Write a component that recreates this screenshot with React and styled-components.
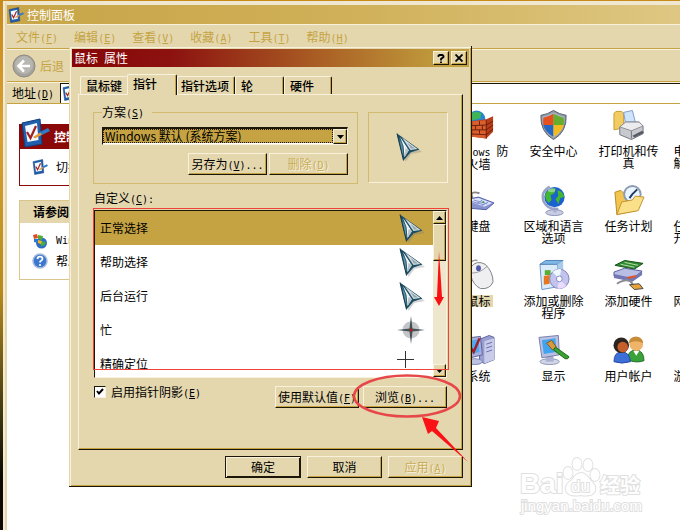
import React from "react";
import styled, { createGlobalStyle, css } from "styled-components";

const c = {
  face: "#e4d7ae",
  light: "#f8f1dc",
  gold: "#c5a343",
  dark: "#1c1708",
  pale: "#d3ba71",
  red: "#8a0808",
};

const GlobalStyle = createGlobalStyle`
  * { box-sizing: border-box; }
  body {
    margin: 0;
    font-family: "Noto Sans CJK SC", "Liberation Sans", sans-serif;
    font-size: 12px;
    line-height: 14px;
    color: #000;
  }
  button, input, select { font: inherit; color: inherit; margin: 0; }
`;

const raised = css`
  background: ${c.face};
  border: 1px solid ${c.dark};
  border-top-color: ${c.light};
  border-left-color: ${c.light};
  box-shadow: inset -1px -1px 0 ${c.gold};
`;

const Desktop = styled.div`
  position: relative;
  min-height: 100vh;
  overflow: hidden;
  padding: 1px 0 0 5px;
  display: flex;
  background: linear-gradient(180deg, #c98a1c 0, #d9a233 25%, #b88a1d 55%, #4d4312 75%, #0c0a03 90%);
`;

const Explorer = styled.section`
  flex: 1;
  min-width: 0;
  display: flex;
  flex-direction: column;
  border-left: 2px solid ${c.face};
  border-top: 4px solid #f0e7d0;
  box-shadow: -2px 0 0 #f3ebd6;
  background: #fff;
`;

const ExplorerTitle = styled.header`
  display: flex;
  align-items: center;
  gap: 3px;
  height: 19px;
  padding-left: 1px;
  background: linear-gradient(90deg, #c7a548, #d0b058 50%, #dec783);
  color: #fff;
`;

const Bar = styled.div`
  display: flex;
  align-items: center;
  height: ${(p) => p.$h}px;
  padding-left: ${(p) => p.$pad}px;
  gap: ${(p) => p.$gap}px;
  background: ${c.face};
  border-top: 1px solid ${c.light};
  border-bottom: 1px solid ${c.gold};
  color: ${(p) => (p.$muted ? c.gold : "#000")};
`;

const PlainButton = styled.button`
  display: flex;
  align-items: center;
  gap: 4px;
  padding: 0;
  border: 0;
  background: none;
  white-space: nowrap;
`;

const AddressBox = styled.div`
  flex: 1;
  height: 20px;
  padding: 1px;
  border-top: 1px solid ${c.dark};
  border-left: 1px solid ${c.dark};
  background: #fff;
`;

const Body = styled.div`
  flex: 1;
  display: flex;
  overflow: hidden;
`;

const Sidebar = styled.aside`
  flex: 0 0 212px;
  padding: 20px 0 0 12px;
  display: flex;
  flex-direction: column;
  gap: 14px;
`;

const Panel = styled.section`
  border: 1px solid ${(p) => (p.$main ? c.red : "#dac68d")};
`;

const PanelHead = styled.h2`
  display: flex;
  align-items: center;
  gap: 4px;
  margin: 0;
  height: ${(p) => (p.$main ? 24 : 22)}px;
  padding-left: ${(p) => (p.$main ? 0 : 13)}px;
  font-size: 12px;
  font-weight: 700;
  color: ${(p) => (p.$main ? "#fff" : "#000")};
  background: ${(p) => (p.$main ? c.red : c.face)};
  svg { margin-top: -8px; }
`;

const PanelBody = styled.div`
  display: flex;
  flex-direction: column;
  padding: ${(p) => p.$py}px 0 ${(p) => p.$py}px 12px;
`;

const SideLink = styled.a`
  display: flex;
  align-items: center;
  gap: 8px;
  height: 20px;
  color: #000;
  text-decoration: none;
  white-space: nowrap;
`;

const Applets = styled.div`
  flex: 1;
  min-width: 0;
  padding: 5px 0 0 222px;
  display: grid;
  grid-template-columns: repeat(4, 75px);
  grid-auto-rows: 75px;
`;

const Applet = styled.a`
  display: flex;
  flex-direction: column;
  align-items: center;
  gap: 4px;
  color: #000;
  text-decoration: none;
  text-align: center;
  line-height: 12px;
  white-space: pre;
  svg { flex: none; }
`;

const AppletLabel = styled.span`
  background: ${(p) => (p.$on ? c.face : "none")};
  padding: 0 2px;
`;

const Mono = styled.span`
  font-family: "DejaVu Sans Mono", monospace;
  font-size: 10px;
  line-height: 10px;
  u { text-underline-offset: 1px; }
`;

/* dialog */
const Dialog = styled.div`
  position: absolute;
  left: 69px;
  top: 46px;
  width: min(403px, calc(100vw - 69px));
  padding: 3px 2px 8px 3px;
  background: ${c.face};
  border-right: 1px solid ${c.dark};
  border-bottom: 1px solid ${c.dark};
  box-shadow: inset 1px 1px 0 ${c.face}, inset 2px 2px 0 ${c.light}, inset -1px -1px 0 ${c.gold};
`;

const DialogTitle = styled.header`
  display: flex;
  align-items: center;
  gap: 2px;
  height: 18px;
  padding: 0 2px;
  color: #fff;
  background: linear-gradient(90deg, #860606 0, #8c1210 25%, #a85a22 60%, #c3a33f 96%);
  h1 {
    flex: 1;
    margin: 0;
    font-size: 12px;
    font-weight: 400;
  }
`;

const CaptionButton = styled.button`
  ${raised}
  width: 16px;
  height: 14px;
  padding: 0;
  display: grid;
  place-items: center;
`;

const DialogBody = styled.div`
  padding: 7px 6px 0;
`;

const Tabs = styled.div`
  display: flex;
  align-items: flex-end;
  height: 20px;
  padding-left: 2px;
`;

const Tab = styled.button`
  height: ${(p) => (p.$on ? 21 : 18)}px;
  width: ${(p) => p.$w}px;
  padding: 0 0 ${(p) => (p.$on ? 2 : 0)}px ${(p) => p.$pad}px;
  text-align: left;
  font-weight: 500;
  white-space: nowrap;
  background: ${c.face};
  border: 1px solid ${c.light};
  border-bottom: 0;
  border-radius: 2px 2px 0 0;
  border-right: ${(p) => (p.$flat ? "0" : `1px solid ${c.dark}`)};
  box-shadow: ${(p) => (p.$flat ? "none" : `inset -1px 0 0 ${c.gold}`)};
  margin-bottom: ${(p) => (p.$on ? -1 : 0)}px;
  position: relative;
  z-index: ${(p) => (p.$on ? 1 : 0)};
`;

const Page = styled.div`
  padding: 10px 13px 41px 14px;
  border: 1px solid ${c.light};
  border-right-color: ${c.dark};
  border-bottom-color: ${c.dark};
  box-shadow: inset -1px -1px 0 ${c.gold};
`;

const Row = styled.div`
  display: flex;
  gap: ${(p) => p.$gap}px;
  justify-content: ${(p) => (p.$end ? "flex-end" : "flex-start")};
`;

const Group = styled.fieldset`
  flex: 1;
  min-width: 0;
  margin: 0;
  padding: 8px 9px 8px 8px;
  border: 1px solid ${c.pale};
  display: flex;
  flex-direction: column;
  gap: 8px;
  legend { padding: 0 8px 0 0; height: 14px; }
`;

const SelectWrap = styled.div`
  display: grid;
  grid-template-columns: 1fr 14px;
  height: 18px;
  border: 1px solid ${c.light};
  border-top: 2px solid ${c.dark};
  border-left: 1px solid ${c.dark};
  background: #fff;
`;

const Select = styled.select`
  grid-column: 1 / 3;
  grid-row: 1;
  appearance: none;
  border: 1px dotted ${c.dark};
  border-radius: 0;
  outline: 0;
  padding: 0 0 0 1px;
  margin-right: 14px;
  height: 14px;
  line-height: 12px;
  background: ${c.gold};
`;

const DropArrow = styled.span`
  ${raised}
  grid-column: 2;
  grid-row: 1;
  display: grid;
  place-items: center;
  pointer-events: none;
`;

const Button = styled.button`
  ${raised}
  flex: 0 0 ${(p) => p.$w}px;
  height: 22px;
  padding: 0;
  white-space: nowrap;
  ${(p) => p.$default && `border-color: ${c.dark}; box-shadow: inset 1px 1px 0 ${c.light}, inset -1px -1px 0 ${c.dark};`}
  &:disabled { color: #c9ac58; text-shadow: 1px 1px 0 ${c.light}; }
`;

const Preview = styled.div`
  flex: 0 0 80px;
  margin: 7px 1px 1px 0;
  border: 1px solid ${c.pale};
  border-right-color: ${c.light};
  border-bottom-color: ${c.light};
  display: grid;
  place-items: center;
`;

const Caption = styled.div`
  height: 14px;
  margin: 7px 0 5px 1px;
`;

const ListFrame = styled.div`
  position: relative;
  margin: 0 2px 0 1px;
  height: 168px;
  display: flex;
  background: #fff;
  border: 1px solid ${c.dark};
  border-right-color: ${c.light};
  border-bottom-color: ${c.light};
`;

const Highlight = styled.div`
  position: absolute;
  inset: -3px -3px 7px -2px;
  border: 1px solid #f0413a;
  pointer-events: none;
`;

const List = styled.ul`
  flex: 1;
  margin: 0 0 8px;
  padding: 0;
  list-style: none;
  overflow: hidden;
`;

const Item = styled.li`
  display: flex;
  align-items: center;
  justify-content: space-between;
  height: 34px;
  padding: 0 8px 0 5px;
  background: ${(p) => (p.$on ? c.gold : "none")};
`;

const IconSlot = styled.span`
  width: 28px;
  display: grid;
  place-items: center start;
`;

const Scroll = styled.div`
  width: 13px;
  display: flex;
  flex-direction: column;
  background: #efe7cd;
`;

const ScrollButton = styled.button`
  ${raised}
  height: 13px;
  padding: 0;
  display: grid;
  place-items: center;
`;

const Thumb = styled.div`
  ${raised}
  height: 37px;
  margin-bottom: auto;
`;

const Options = styled.div`
  display: flex;
  align-items: center;
  gap: 4px;
  margin: 8px 2px 0 1px;
`;

const Check = styled.label`
  flex: 1;
  display: flex;
  align-items: center;
  gap: 5px;
  margin-top: -10px;
  white-space: nowrap;
`;

const CheckBox = styled.span`
  display: grid;
  width: 12px;
  height: 12px;
  place-items: center;
  input, svg { grid-area: 1 / 1; }
  svg { pointer-events: none; }
  input {
    appearance: none;
    width: 12px;
    height: 12px;
    background: #fff;
    border: 1px solid ${c.light};
    border-top-color: ${c.dark};
    border-left-color: ${c.dark};
  }
`;

const Footer = styled.footer`
  display: flex;
  justify-content: flex-end;
  gap: 6px;
  padding-top: 6px;
`;

const Marks = styled.svg`
  position: absolute;
  left: 0;
  top: 0;
  overflow: visible;
  pointer-events: none;
`;

const Watermark = styled.svg`
  position: absolute;
  right: 32px;
  bottom: 10px;
  fill: #fff;
  stroke: #e0e0e0;
  stroke-width: 2px;
  paint-order: stroke;
  font-family: "Liberation Sans", "Noto Sans CJK SC", sans-serif;
`;

const Key = ({ k, dots, colon }) => (
  <Mono>
    (<u>{k}</u>){dots ? "..." : ""}{colon ? ":" : ""}
  </Mono>
);

const Arrow = ({ up }) => (
  <svg width="7" height="4" viewBox="0 0 7 4">
    <path d={up ? "M0 4L3.5 0L7 4Z" : "M0 0H7L3.5 4Z"} fill="#000" />
  </svg>
);

const Cursor = () => (
  <svg width="28" height="29" viewBox="-3 0 28 29">
    <path d="M2.500 2.500L25 19L14.500 21L8.500 29Z" fill="#777" opacity="0.3" />
    <path d="M0 0.500L22.500 16.500L13.500 19.500L6.500 27.500Z" fill="#1d4f64" />
    <path d="M2 5L5.500 12L6.500 22L6 24Z" fill="#5d8ea3" />
    <path d="M3 4L12 17L7.500 24L6.500 13Z" fill="#f3f6f7" />
    <path d="M8.500 15L12 17L7.500 24Z" fill="#b8c3c9" />
    <path d="M4.500 4.500L12.500 15L11.500 17Z" fill="#23586f" />
    <path d="M5 4.500L20.500 16L13.500 17Z" fill="#d5dce0" />
    <path d="M10.500 10L18 15.500L14 15.500Z" fill="#8fa5b0" />
    <path d="M0 0.500L6.500 27.500" stroke="#12394a" />
  </svg>
);

const BusyCursor = () => (
  <svg width="28" height="28" viewBox="0 0 28 28">
    <circle cx="14" cy="14" r="8.500" fill="#c5c5c7" />
    <path d="M14 0L15.500 12.500L28 14L15.500 15.500L14 28L12.500 15.500L0 14L12.500 12.500Z" fill="#405358" />
    <circle cx="14" cy="14" r="1.500" fill="#c01818" />
  </svg>
);

const CrossCursor = () => (
  <svg width="28" height="28" viewBox="0 0 28 28">
    <path d="M8.500 1V18M0 9.500H17" stroke="#333" />
  </svg>
);

const PanelIcon = ({ s }) => (
  <svg width={s} height={s} viewBox="0 0 30 30">
    <path d="M2 5L20 1L22 26L5 29Z" fill="#1e5fae" />
    <path d="M2 5L20 1L22 26L5 29Z" fill="none" stroke="#123c7c" />
    <path d="M5 8L17 5L18.500 22L7.500 24Z" fill="#f4f9ff" />
    <path d="M7 14L10.500 20L16 8" fill="none" stroke="#a32020" strokeWidth="2.200" />
    <path d="M13 19L21 14L22.500 16.500L15 20.500Z" fill="#e8953c" />
    <path d="M20 14L28 10L30 13L22 17Z" fill="#2e7cc9" />
  </svg>
);

const BackIcon = () => (
  <svg width="24" height="24" viewBox="0 0 24 24">
    <circle cx="12" cy="12" r="11" fill="#a5a39d" stroke="#8e8b82" />
    <circle cx="12" cy="11" r="9" fill="#b8b6b0" />
    <path d="M18 12H7M12 6.500L6.500 12L12 17.500" fill="none" stroke="#fff" strokeWidth="2.600" />
  </svg>
);

const UpdateIcon = () => (
  <svg width="16" height="16" viewBox="0 0 16 16">
    <circle cx="9.500" cy="10" r="5.500" fill="#2c6cc4" />
    <path d="M8 9Q12 7 14 10Q12 14 9 13Z" fill="#49a849" />
    <path d="M1 2L5 1L6 5L2 6Z" fill="#e04c20" />
    <path d="M6 2L11 3L10 7L6 6Z" fill="#53ac35" />
    <path d="M2 6L6 6L6 10L2 9Z" fill="#2c78d0" />
    <path d="M6 7L10 8L9 11L6 10Z" fill="#f0b820" />
  </svg>
);

const HelpIcon = () => (
  <svg width="16" height="16" viewBox="0 0 16 16">
    <circle cx="8" cy="8" r="7" fill="#3b76cf" stroke="#a9bbda" strokeWidth="1.500" />
    <path d="M5.500 6Q5.500 3.700 8 3.700Q10.500 3.700 10.500 5.800Q10.500 7 9 7.800Q8 8.400 8 9.500" fill="none" stroke="#fff" strokeWidth="1.800" />
    <circle cx="8" cy="12" r="1.100" fill="#fff" />
  </svg>
);

const drawings = {
  firewall: (
    <>
      <circle cx="14" cy="10" r="9" fill="#2784cf" />
      <path d="M7 6Q12 0 19 4L18 9L10 11Z" fill="#3fb558" />
      <path d="M2 13L24 10L31 7V23L24 30L2 27Z" fill="#b83d18" />
      <path d="M2 13L24 11V30L2 27Z" fill="#d95f2c" />
      <path d="M2 17L24 16L31 12M2 21L24 21L31 16M2 25L24 26L31 20M24 11V30M9 13V17M17 12V16M5 17V21M13 17V21M20 16V21M9 21V25M17 21V25" stroke="#6b1e0b" fill="none" />
    </>
  ),
  shield: (
    <>
      <path d="M16 1Q22 5 29 6Q30 23 16 31Q2 23 3 6Q10 5 16 1Z" fill="#8e98a6" stroke="#566070" />
      <path d="M16 3Q22 6 27.500 7.500Q28 22 16 29.500Q4 22 4.500 7.500Q10 6 16 3Z" fill="#aab4c2" />
      <path d="M16 4.500V16H5.500Q5 12 5.500 8.500Q11 7.500 16 4.500Z" fill="#e5501e" />
      <path d="M16 4.500V16H26.500Q27 12 26.500 8.500Q21 7.500 16 4.500Z" fill="#66ad2c" />
      <path d="M16 16V28.500Q7 23 5.500 16Z" fill="#2667c6" />
      <path d="M16 16V28.500Q25 23 26.500 16Z" fill="#f4bb20" />
    </>
  ),
  printer: (
    <>
      <path d="M1 4L3 2H9L11 4V19L1 21Z" fill="#f2cb62" stroke="#c79a30" />
      <path d="M11 3L20 1L23 13L13 15Z" fill="#cfe3fb" stroke="#7c9ccc" />
      <path d="M7 18L13 13H27L31 17V25L19 31L7 26Z" fill="#c7c9ce" stroke="#73767d" />
      <path d="M7 18L19 22L31 17L27 13H13Z" fill="#ececef" stroke="#8c8f96" />
      <path d="M19 22V30" stroke="#73767d" />
      <path d="M20 27L30 22L32 24L22 29Z" fill="#555a63" />
    </>
  ),
  keyboard: (
    <>
      <path d="M10 14Q6 6 17 9" fill="none" stroke="#888" strokeWidth="2" />
      <path d="M1 16L16 13L32 19L24 26L1 24Z" fill="#8793cf" stroke="#5261a8" />
      <path d="M3 16L16 14L30 19L22 23Z" fill="#dfe4ff" />
      <path d="M7 17L22 21M11 16L25 20M14 20L20 16M19 22L26 18" stroke="#7c8ac8" />
      <circle cx="21" cy="18" r="1" fill="#2fa53a" />
    </>
  ),
  globe: (
    <>
      <ellipse cx="17" cy="29" rx="9" ry="3" fill="#c9cde4" stroke="#8b91b5" />
      <path d="M16 24H19V29H16Z" fill="#a9afd0" />
      <path d="M12 2Q2 8 6 18Q11 27 21 25" fill="none" stroke="#9aa1c6" strokeWidth="2.500" />
      <circle cx="17" cy="13" r="10.500" fill="#1b62cf" />
      <path d="M8 9Q12 3 18 4L17 9L13 11L14 16L11 19Q6 14 8 9Z" fill="#43b72f" />
      <path d="M20 6Q26 7 27 13L23 14L21 20L18 15L21 12Z" fill="#43b72f" />
      <ellipse cx="14" cy="6" rx="4" ry="2" fill="#fff" opacity="0.4" />
    </>
  ),
  task: (
    <>
      <path d="M2 8L8 6L11 9L24 7V27L4 31Z" fill="#f2c550" stroke="#b88a25" />
      <circle cx="20" cy="10" r="9.500" fill="#8e9bb0" />
      <circle cx="20" cy="10" r="7.500" fill="#eaf5ff" />
      <path d="M20 10L25 5M20 10L17 14" stroke="#1d3b66" strokeWidth="2" />
      <path d="M4 31L9 18L20 16L23 12L32 13L26 27Z" fill="#fbe08a" stroke="#c3942a" />
    </>
  ),
  mouse: (
    <>
      <path d="M8 8Q6 0 15 1" fill="none" stroke="#999" strokeWidth="1.500" />
      <path d="M8 8Q14 0 23 5Q31 13 31 23Q28 31 18 30Q10 26 8 16Z" fill="#efeff1" stroke="#7d7e85" />
      <path d="M9 14Q18 14 25 7" fill="none" stroke="#9b9ca5" />
      <ellipse cx="16" cy="9" rx="2.500" ry="3" fill="#5359ad" />
    </>
  ),
  install: (
    <>
      <path d="M2 5L20 3L21 28L4 31Z" fill="#dcebfa" stroke="#6a96c9" />
      <path d="M2 5L8 1L26 1L20 5Z" fill="#7db8e8" stroke="#5180b2" />
      <path d="M20 5L26 1V26L21 28Z" fill="#a9cbe9" />
      <path d="M6 17L12 16V25L6 26Z" fill="#e6761f" />
      <path d="M7 11H13V16H7Z" fill="#58ad36" />
      <circle cx="22" cy="20" r="10" fill="#c3c4ee" stroke="#7e80b8" />
      <path d="M22 20L15 13A10 10 0 0 1 24 10Z" fill="#eef8ff" />
      <path d="M22 20L29 27A10 10 0 0 1 20 30Z" fill="#e9dcff" />
      <circle cx="22" cy="20" r="3" fill="#fff" stroke="#8587bb" />
    </>
  ),
  hardware: (
    <>
      <path d="M2 6L12 1L31 4L22 10Z" fill="#2f8b30" stroke="#17501a" />
      <path d="M8 5L22 8M12 3L26 6" stroke="#b9dba8" />
      <path d="M1 13L12 9L30 12L20 20L1 17Z" fill="#b9bee5" stroke="#5a609b" />
      <path d="M1 15V19L20 23L30 16V12L20 19Z" fill="#7277b6" />
      <path d="M14 18L24 16V18L16 20Z" fill="#d9572a" />
      <path d="M4 25Q16 18 20 25T29 27" fill="none" stroke="#8a8c92" strokeWidth="2" />
      <path d="M17 26L27 25L31 30L22 31Z" fill="#e8a23a" stroke="#444" />
    </>
  ),
  system: (
    <>
      <path d="M17 5L27 1L32 3V26L22 30L17 27Z" fill="#989ed0" stroke="#5d639d" />
      <path d="M22 7L32 4V26L22 30Z" fill="#c8cbe9" />
      <path d="M24 10L30 8M24 14L30 12M24 18L30 16" stroke="#666dab" />
      <path d="M1 4L18 2L20 21L4 25Z" fill="#a9b0dd" stroke="#5d639d" />
      <path d="M4 7L16 5L17 18L6 21Z" fill="#50aaf0" />
      <path d="M7 12L11 18L17 4" stroke="#a31d24" strokeWidth="2.500" fill="none" />
      <ellipse cx="12" cy="28" rx="8" ry="3" fill="#bdc2e3" stroke="#7f85b5" />
    </>
  ),
  display: (
    <>
      <ellipse cx="12" cy="28" rx="10" ry="3" fill="#d2d5e8" stroke="#9297b5" />
      <path d="M8 22H16V28H8Z" fill="#aab0cf" />
      <path d="M1 3L21 1L22 21L4 24Z" fill="#b9c0e1" stroke="#777eac" />
      <path d="M4 6L18 4L19 18L6 20Z" fill="#41a4ee" />
      <path d="M9 9L14 6L19 13L15 16Z" fill="#d99a3b" stroke="#85591a" />
      <path d="M18 13L32 23Q31 26 28 25L16 16Z" fill="#39a230" stroke="#1d6a1a" />
    </>
  ),
  users: (
    <>
      <path d="M15 26Q15 16 24 16Q32 17 32 27Q24 30 15 26Z" fill="#3ba13a" stroke="#22702a" />
      <path d="M21 17L24 22L27 17Z" fill="#fff" />
      <circle cx="24" cy="10" r="7" fill="#eeb46a" />
      <path d="M16 9Q17 2 24 2Q31 3 31 9Q24 5 16 9Z" fill="#c78c3a" />
      <path d="M1 28Q1 18 9 18Q17 18 18 28Q9 31 1 28Z" fill="#3d6fd8" stroke="#2145a0" />
      <circle cx="8.500" cy="11" r="8" fill="#2b2420" />
      <circle cx="10" cy="13" r="5.500" fill="#c5602b" />
    </>
  ),
};

const applets = [
  ["firewall", "Windows 防\n火墙"],
  ["shield", "安全中心"],
  ["printer", "打印机和传\n真"],
  [null, "电话和调制\n解调器选项"],
  ["keyboard", "键盘"],
  ["globe", "区域和语言\n选项"],
  ["task", "任务计划"],
  [null, "任务栏和「\n开始」菜单"],
  ["mouse", "鼠标", true],
  ["install", "添加或删除\n程序"],
  ["hardware", "添加硬件"],
  [null, "网络安装向\n导"],
  ["system", "系统"],
  ["display", "显示"],
  ["users", "用户帐户"],
  [null, "游戏控制器"],
];

const menus = [["文件", "F"], ["编辑", "E"], ["查看", "V"], ["收藏", "A"], ["工具", "T"], ["帮助", "H"]];

const pointers = [
  ["正常选择", Cursor],
  ["帮助选择", Cursor],
  ["后台运行", Cursor],
  ["忙", BusyCursor],
  ["精确定位", CrossCursor],
];

const renderLabel = (text) =>
  text.startsWith("Windows ") ? (
    <>
      <Mono>Windows </Mono>
      {text.slice(8)}
    </>
  ) : (
    text
  );

function ControlPanel() {
  return (
    <Explorer>
      <ExplorerTitle>
        <PanelIcon s={16} />
        控制面板
      </ExplorerTitle>
      <Bar as="nav" $h={25} $pad={9} $gap={16} $muted>
        {menus.map(([name, key]) => (
          <PlainButton key={name}>
            <span>{name}<Key k={key} /></span>
          </PlainButton>
        ))}
      </Bar>
      <Bar $h={33} $pad={5} $gap={4} $muted>
        <PlainButton><BackIcon />后退</PlainButton>
      </Bar>
      <Bar $h={22} $pad={5} $gap={6}>
        <span>地址<Key k="D" /></span>
        <AddressBox><PanelIcon s={16} /></AddressBox>
      </Bar>
      <Body>
        <Sidebar>
          <Panel $main>
            <PanelHead $main><PanelIcon s={30} />控制面板</PanelHead>
            <PanelBody $py={8}>
              <SideLink href="#view"><PanelIcon s={16} />切换到分类视图</SideLink>
            </PanelBody>
          </Panel>
          <Panel>
            <PanelHead>请参阅</PanelHead>
            <PanelBody $py={8}>
              <SideLink href="#update"><UpdateIcon /><Mono>Windows Update</Mono></SideLink>
              <SideLink href="#help"><HelpIcon />帮助和支持</SideLink>
            </PanelBody>
          </Panel>
        </Sidebar>
        <Applets>
          {applets.map(([icon, label, on]) => (
            <Applet href="#applet" key={label}>
              <svg width="32" height="32" viewBox="0 0 33 32">{icon && drawings[icon]}</svg>
              <AppletLabel $on={on}>{renderLabel(label)}</AppletLabel>
            </Applet>
          ))}
        </Applets>
      </Body>
    </Explorer>
  );
}

function MouseDialog() {
  return (
    <Dialog role="dialog" aria-labelledby="dialog-title">
      <DialogTitle>
        <h1 id="dialog-title">鼠标<Mono>&nbsp;</Mono>属性</h1>
        <CaptionButton aria-label="帮助">
          <svg width="8" height="9" viewBox="0 0 8 9">
            <path d="M1.500 3V1.500L2.500 1H5.500L6.500 2V3L4 5V6.500M4 7.500V9" fill="none" stroke="#000" strokeWidth="1.800" />
          </svg>
        </CaptionButton>
        <CaptionButton aria-label="关闭">
          <svg width="8" height="8" viewBox="0 0 8 8">
            <path d="M0.500 0.500L7.500 7.500M7.500 0.500L0.500 7.500" stroke="#000" strokeWidth="1.800" />
          </svg>
        </CaptionButton>
      </DialogTitle>
      <DialogBody>
        <Tabs role="tablist">
          <Tab role="tab" $w={47} $pad={5} $flat>鼠标键</Tab>
          <Tab role="tab" $w={50} $pad={5} $on aria-selected="true">指针</Tab>
          <Tab role="tab" $w={58} $pad={3}>指针选项</Tab>
          <Tab role="tab" $w={49} $pad={5}>轮</Tab>
          <Tab role="tab" $w={48} $pad={5}>硬件</Tab>
        </Tabs>
        <Page role="tabpanel">
          <Row $gap={10}>
            <Group>
              <legend><label htmlFor="scheme">方案<Key k="S" /></label></legend>
              <SelectWrap>
                <Select id="scheme"><option>Windows 默认 (系统方案)</option></Select>
                <DropArrow><Arrow /></DropArrow>
              </SelectWrap>
              <Row $gap={2} $end>
                <Button $w={79}>另存为<Key k="V" dots /></Button>
                <Button $w={79} disabled>删除<Key k="D" /></Button>
              </Row>
            </Group>
            <Preview><Cursor /></Preview>
          </Row>
          <Caption id="custom">自定义<Key k="C" colon /></Caption>
          <ListFrame>
            <List aria-labelledby="custom">
              {pointers.map(([name, Icon], i) => (
                <Item key={name} $on={i === 0}>
                  {name}
                  <IconSlot><Icon /></IconSlot>
                </Item>
              ))}
            </List>
            <Scroll>
              <ScrollButton aria-label="向上"><Arrow up /></ScrollButton>
              <Thumb />
              <ScrollButton aria-label="向下"><Arrow /></ScrollButton>
            </Scroll>
            <Highlight />
          </ListFrame>
          <Options>
            <Check>
              <CheckBox>
                <input type="checkbox" defaultChecked />
                <svg width="8" height="8" viewBox="0 0 8 8">
                  <path d="M1 3L3 5.500L7 1" fill="none" stroke="#000" strokeWidth="2" />
                </svg>
              </CheckBox>
              <span>启用指针阴影<Key k="E" /></span>
            </Check>
            <Button $w={84}>使用默认值<Key k="F" /></Button>
            <Button $w={84}>浏览<Key k="B" dots /></Button>
          </Options>
        </Page>
        <Footer>
          <Button $w={76} $default>确定</Button>
          <Button $w={75}>取消</Button>
          <Button $w={75} disabled>应用<Key k="A" /></Button>
        </Footer>
      </DialogBody>
      <Marks width="403" height="441" viewBox="0 0 403 441">
        <ellipse cx="338" cy="350" rx="53" ry="20.500" fill="none" stroke="#e8474a" strokeWidth="2.500" />
        <path d="M370 205L373 251H375L370 260L365 251H368Z" fill="#fb0f12" />
        <path d="M353 371L370 375L367 382L399 416L363 385L359 388Z" fill="#fb1216" />
      </Marks>
    </Dialog>
  );
}

export default function App() {
  return (
    <>
      <GlobalStyle />
      <Desktop>
        <ControlPanel />
        <MouseDialog />
        <Watermark width="130" height="66" viewBox="0 0 130 66">
          <text x="2" y="39" fontSize="28" fontWeight="700">Bai</text>
          <text x="82" y="39" fontSize="20" fontWeight="700">经验</text>
          <text x="3" y="57" fontSize="15">jingyan.baidu.com</text>
          <ellipse cx="50" cy="19" rx="4.500" ry="6" />
          <ellipse cx="59" cy="10" rx="4.500" ry="6" />
          <ellipse cx="70" cy="11" rx="4.500" ry="6" />
          <ellipse cx="77" cy="21" rx="4.500" ry="6" />
          <path d="M63 19Q68 19 72 26Q79 32 77 37Q74 43 63 41Q51 43 48 37Q46 31 54 26Q58 19 63 19Z" />
          <text x="53" y="38" fontSize="17">du</text>
        </Watermark>
      </Desktop>
    </>
  );
}
